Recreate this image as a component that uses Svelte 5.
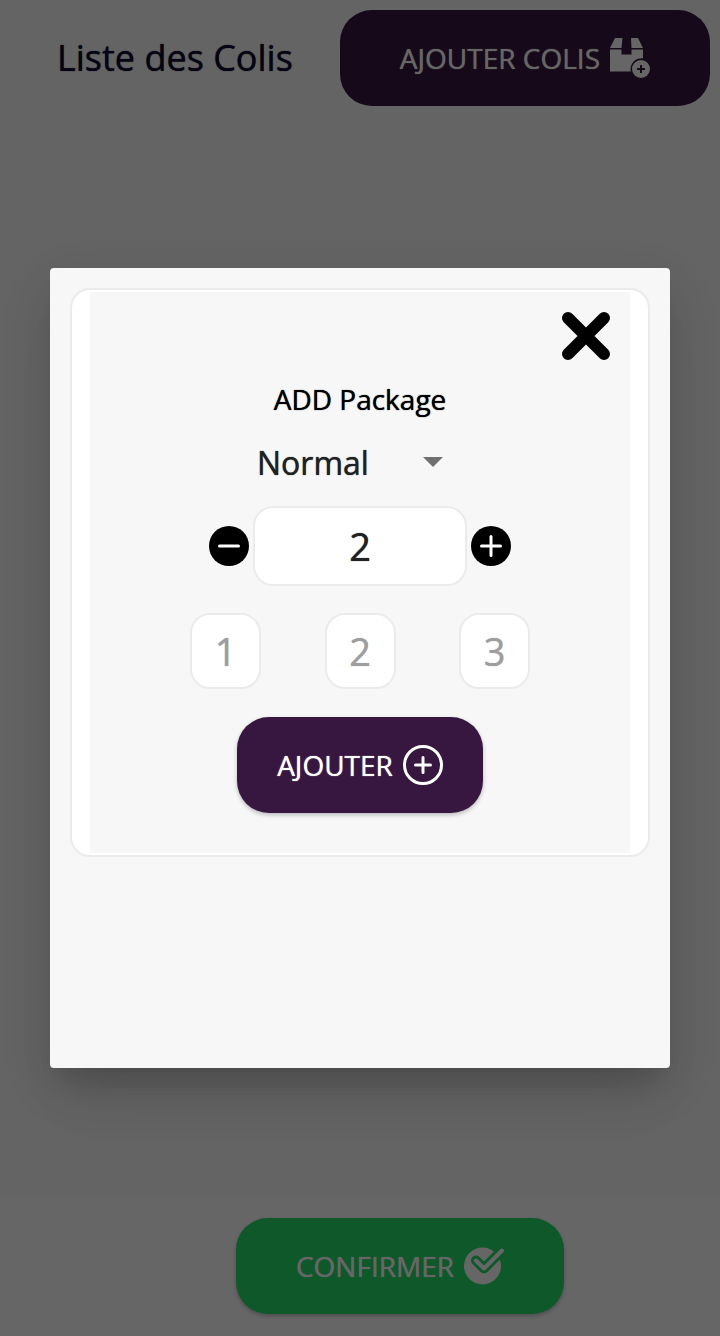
<script>
  let kind = $state('Normal');
  let quantity = $state(2);
  const presets = [1, 2, 3];
  const decrease = () => (quantity = Math.max(1, Number(quantity) - 1));
  const increase = () => (quantity = Number(quantity) + 1);
</script>

<div class="page">
  <header class="topbar">
    <h1>Liste des Colis</h1>
    <button class="btn wide" type="button">
      <span>AJOUTER COLIS</span>
      <svg class="icon" viewBox="0 0 40 40" aria-hidden="true">
        <path fill="currentColor" d="M5 0H12.500L11.500 10H0ZM21 0H28L33 10H21.500ZM0 11.500H11.500V16.500H21.500V11.500H33V20.300A11 11 0 0 0 20.800 33.500H0Z" />
        <circle cx="31" cy="31" r="9" fill="currentColor" />
        <path class="cut" d="M31 27V35M27 31H35" />
      </svg>
    </button>
  </header>

  <main></main>

  <footer class="bottombar">
    <button class="btn wide confirm" type="button">
      <span>CONFIRMER</span>
      <svg class="icon" viewBox="0 0 40 40" aria-hidden="true">
        <circle cx="18.500" cy="20" r="18.500" fill="currentColor" />
        <path class="tick-edge" d="M12 14.500L20 22.500L38 4.500" />
        <path class="tick" d="M12 14.500L20 22.500L38 4.500" />
      </svg>
    </button>
  </footer>
</div>

<div class="overlay">
  <div class="dialog" role="dialog" aria-modal="true" aria-labelledby="dialog-title">
    <div class="card">
      <form class="panel" onsubmit={(e) => e.preventDefault()}>
        <button class="plain close" type="button" aria-label="Fermer">
          <svg viewBox="0 0 48 48" width="48" height="48" aria-hidden="true">
            <path d="M6 6L42 42M42 6L6 42" stroke="#000" stroke-width="12" stroke-linecap="round" />
          </svg>
        </button>

        <h2 id="dialog-title">ADD Package</h2>

        <div class="select">
          <select bind:value={kind} aria-label="Type">
            <option>Normal</option>
            <option>Fragile</option>
          </select>
          <svg viewBox="0 0 20 10" width="20" height="10" aria-hidden="true">
            <path d="M0 0H20L10 10Z" fill="#707070" />
          </svg>
        </div>

        <div class="stepper">
          <button class="plain" type="button" aria-label="Moins" onclick={decrease}>
            <svg class="icon" viewBox="0 0 40 40" aria-hidden="true">
              <circle cx="20" cy="20" r="20" />
              <path class="sign" d="M10.500 20H29.500" />
            </svg>
          </button>
          <input class="field quantity" type="text" inputmode="numeric" aria-label="Quantité" bind:value={quantity} />
          <button class="plain" type="button" aria-label="Plus" onclick={increase}>
            <svg class="icon" viewBox="0 0 40 40" aria-hidden="true">
              <circle cx="20" cy="20" r="20" />
              <path class="sign" d="M10.500 20H29.500M20 10.500V29.500" />
            </svg>
          </button>
        </div>

        <div class="presets">
          {#each presets as n}
            <button class="field preset" type="button" onclick={() => (quantity = n)}>{n}</button>
          {/each}
        </div>

        <button class="btn" type="submit">
          <span>AJOUTER</span>
          <svg class="icon" viewBox="0 0 40 40" fill="none" stroke="currentColor" stroke-width="3" stroke-linecap="round" aria-hidden="true">
            <circle cx="20" cy="20" r="18.500" />
            <path d="M20 12.500V27.500M12.500 20H27.500" />
          </svg>
        </button>
      </form>
    </div>
  </div>
</div>

<style>
  :global(body) {
    margin: 0;
    background: #fafafa;
  }

  .page,
  .overlay,
  button,
  input,
  select {
    font-family: 'Open Sans', 'Noto Sans', sans-serif;
    font-weight: 500;
    text-shadow: 0 0 1px currentColor;
  }

  .page {
    display: flex;
    flex-direction: column;
    min-height: 100vh;
  }

  main {
    flex: 1;
  }

  .topbar {
    display: flex;
    align-items: center;
    padding: 10px;
  }

  h1 {
    flex: 1;
    margin: 0;
    text-align: center;
    font-size: 36px;
    line-height: 48px;
    font-weight: 500;
    color: #0f0a2e;
  }

  .btn {
    display: flex;
    align-items: center;
    gap: 10px;
    height: 96px;
    padding: 0 40px;
    border: 0;
    border-radius: 32px;
    background: #371740;
    color: #fff;
    font-size: 28px;
    line-height: 40px;
    white-space: nowrap;
    box-shadow: 0 2px 4px rgba(0, 0, 0, 0.25);
  }

  .btn.wide {
    padding: 0 60px;
  }

  .topbar .btn {
    box-shadow: none;
  }

  .btn.confirm {
    background: #23dc69;
  }

  .icon {
    display: block;
    flex: none;
    width: 40px;
    height: 40px;
  }

  .cut {
    stroke: #371740;
    stroke-width: 2;
  }

  .tick-edge,
  .tick {
    fill: none;
    stroke-linecap: round;
    stroke-linejoin: round;
  }

  .tick-edge {
    stroke: #23dc69;
    stroke-width: 10;
  }

  .tick {
    stroke: currentColor;
    stroke-width: 4;
  }

  .bottombar {
    display: flex;
    justify-content: center;
    padding: 22px 0 22px 80px;
    background: #fff;
  }

  .overlay {
    position: fixed;
    inset: 0;
    display: flex;
    flex-direction: column;
    justify-content: center;
    padding: 50px;
    background: rgba(0, 0, 0, 0.6);
  }

  .dialog {
    min-height: 760px;
    padding: 20px;
    border-radius: 4px;
    background: #f7f7f7;
    box-shadow:
      0 22px 30px -14px rgba(0, 0, 0, 0.2),
      0 48px 76px 6px rgba(0, 0, 0, 0.04),
      0 18px 60px 8px rgba(0, 0, 0, 0.12);
  }

  .card {
    padding: 2px 18px;
    border: 2px solid #ebebeb;
    border-radius: 20px;
    background: #fff;
  }

  .panel {
    display: flex;
    flex-direction: column;
    align-items: center;
    padding: 20px 20px 40px;
    background: #f7f7f7;
  }

  .plain {
    display: block;
    padding: 0;
    border: 0;
    background: none;
  }

  .close {
    align-self: flex-end;
  }

  .close svg {
    display: block;
  }

  h2 {
    margin: 19px 0;
    font-size: 28px;
    line-height: 40px;
    font-weight: 500;
    color: #000;
  }

  .select {
    display: grid;
    align-items: center;
    width: 206px;
    margin-bottom: 20px;
  }

  .select > * {
    grid-area: 1 / 1;
  }

  select {
    appearance: none;
    width: 100%;
    height: 48px;
    padding: 0;
    border: 0;
    background: none;
    color: #212121;
    font-size: 32px;
  }

  .select svg {
    justify-self: end;
    margin-right: 20px;
    pointer-events: none;
  }

  .stepper {
    display: flex;
    align-items: center;
    gap: 4px;
  }

  .sign {
    stroke: #fff;
    stroke-width: 3;
    stroke-linecap: round;
  }

  .field {
    box-sizing: border-box;
    padding: 0;
    border: 2px solid #ebebeb;
    border-radius: 20px;
    background: #fff;
    text-align: center;
    font-size: 38px;
  }

  .quantity {
    width: 214px;
    height: 80px;
    color: #212121;
  }

  .presets {
    display: flex;
    justify-content: space-between;
    width: 340px;
    margin: 27px 0 28px;
  }

  .preset {
    width: 71px;
    height: 76px;
    color: #9e9e9e;
  }
</style>
